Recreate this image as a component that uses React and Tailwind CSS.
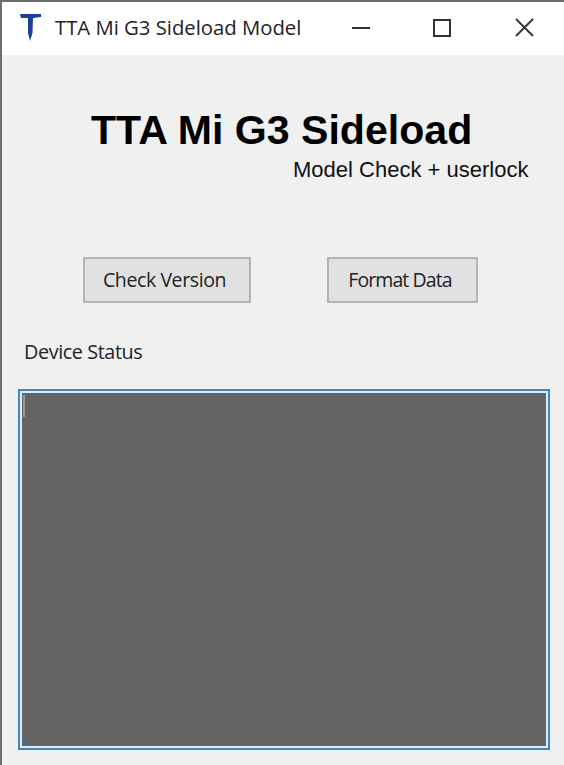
const FONT = "font-['Open_Sans','Noto_Sans',sans-serif]";

function TitleLogo() {
  return (
    <svg width="24" height="30" viewBox="0 0 24 30" className="shrink-0 -mt-[2px]">
      <path d="M1 1 L22 1 L22 4 L14 5 L13.5 20 L11 28 L9 20 L9 5 L2 5 Z" fill="#1f3fa0" />
    </svg>
  );
}

export default function App() {
  return (
    <div className="w-[564px] h-[765px] overflow-hidden flex flex-col bg-[#f0f0f0] border-t-2 border-l-2 border-[#6e6e6e]">
      {/* Barra de titulo */}
      <div className="h-[53px] shrink-0 bg-white flex items-center pl-[17px]">
        <TitleLogo />
        <span className={`${FONT} ml-[12px] w-[282px] -mt-[2px] text-[20.3px] text-[#222222] whitespace-nowrap`}>TTA Mi G3 Sideload Model</span>
        <div className="flex items-center text-[#333333] -mt-[2px]">
          <svg width="18" height="18" viewBox="0 0 18 18" className="ml-[15px]">
            <path d="M0 9 H18" stroke="currentColor" strokeWidth="2" />
          </svg>
          <svg width="18" height="18" viewBox="0 0 18 18" className="ml-[63px]">
            <rect x="1" y="1" width="16" height="16" fill="none" stroke="currentColor" strokeWidth="2" />
          </svg>
          <svg width="19" height="19" viewBox="0 0 19 19" className="ml-[64px]">
            <path d="M1 1 L18 18 M18 1 L1 18" stroke="currentColor" strokeWidth="1.8" />
          </svg>
        </div>
      </div>

      {/* Cabecera */}
      <h1 className="font-['Liberation_Sans',Arial,sans-serif] font-bold text-[41.1px] leading-[46px] text-black mt-[52px] ml-[89px] whitespace-nowrap">TTA Mi G3 Sideload</h1>
      <p className="font-['Liberation_Sans',Arial,sans-serif] text-[22px] leading-[24px] text-[#111111] mt-[5px] ml-[291px] whitespace-nowrap">Model Check + userlock</p>

      {/* Botones */}
      <div className="flex mt-[75px] ml-[81px] gap-[76px]">
        <button className={`${FONT} w-[168px] h-[46px] pr-[5px] bg-[#e1e1e1] border-2 border-[#b4b4b4] text-[19.5px] tracking-[-0.4px] text-[#222222]`}>Check Version</button>
        <button className={`${FONT} w-[151px] h-[46px] pr-[5px] bg-[#e1e1e1] border-2 border-[#b4b4b4] text-[19.5px] tracking-[-0.9px] text-[#222222]`}>Format Data</button>
      </div>

      <p className={`${FONT} mt-[35px] ml-[22px] text-[19.8px] leading-[28px] tracking-[-0.4px] text-[#222222]`}>Device Status</p>

      {/* Salida */}
      <div className="mt-[23px] ml-[16px] w-[532px] h-[361px] border-2 border-[#3f87c0] bg-[#d9ecfa] p-[2px]">
        <div className="w-full h-full bg-[#646464] pt-[2px] pl-[1px]">
          <div className="w-[2px] h-[22px] bg-[#9a9a9a]" />
        </div>
      </div>
    </div>
  );
}
